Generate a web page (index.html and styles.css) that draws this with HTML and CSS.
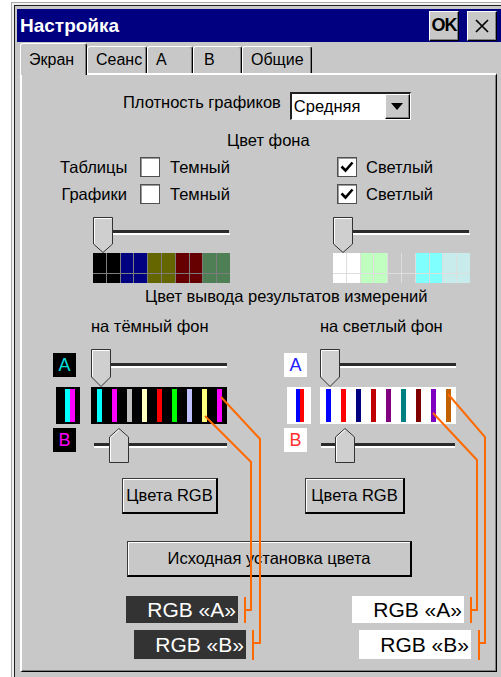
FILE: index.html
```html
<!doctype html>
<html lang="ru">
<head>
    <meta charset="UTF-8">
    <title>Настройка</title>
    <link rel="stylesheet" href="styles.css">
</head>
<body>
    <div class="window">
        <div class="frame">
            <div class="titlebar">
                <span class="title">Настройка</span>
                <button class="tb-btn ok">OK</button>
                <button class="tb-btn close">
                    <svg width="14" height="14" viewBox="0 0 14 14"><path d="M1 1L13 13M13 1L1 13" stroke="#000" stroke-width="1.7"/></svg>
                </button>
            </div>

            <!-- tabs -->
            <div class="tabs">
                <div class="tab active tab-screen">Экран</div>
                <div class="tab tab-session">Сеанс</div>
                <div class="tab tab-a">А</div>
                <div class="tab tab-b">В</div>
                <div class="tab tab-common">Общие</div>
            </div>

            <div class="panel">
                <div class="density">
                    <span class="density-label">Плотность графиков</span>
                    <div class="select">
                        <span class="select-value">Средняя</span>
                        <span class="select-arrow"><i></i></span>
                    </div>
                </div>

                <div class="caption bg-caption">Цвет фона</div>

                <div class="checks">
                    <span class="check-label">Таблицы</span>
                    <span class="checkbox"></span>
                    <span class="check-text">Темный</span>
                    <span class="checkbox checked"><svg width="18" height="18" viewBox="0 0 18 18"><path d="M3.5 8.5L7.5 12.5L14.5 4.5" fill="none" stroke="#000" stroke-width="2.6"/></svg></span>
                    <span class="check-text-right">Светлый</span>
                </div>
                <div class="checks">
                    <span class="check-label">Графики</span>
                    <span class="checkbox"></span>
                    <span class="check-text">Темный</span>
                    <span class="checkbox checked"><svg width="18" height="18" viewBox="0 0 18 18"><path d="M3.5 8.5L7.5 12.5L14.5 4.5" fill="none" stroke="#000" stroke-width="2.6"/></svg></span>
                    <span class="check-text-right">Светлый</span>
                </div>

                <!-- background palettes -->
                <div class="palettes">
                    <div class="palette">
                        <svg class="slider" width="137" height="36" viewBox="0 0 137 36">
                            <rect x="0" y="13" width="136" height="3" fill="#2b2b2b"/>
                            <rect x="0" y="16" width="137" height="2" fill="#fff"/>
                            <path d="M0.5 0.5H19.5V27L10 35.5L0.5 27Z" fill="#cfcfcf" stroke="#333"/>
                            <path d="M1.5 26.5V1.5H18.5" fill="none" stroke="#fff"/>
                        </svg>
                        <div class="swatches swatches-dark">
                            <i class="c-black"></i><i class="c-black"></i>
                            <i class="c-black"></i><i class="c-black"></i>
                            <i class="c-navy"></i><i class="c-navy"></i>
                            <i class="c-navy"></i><i class="c-navy"></i>
                            <i class="c-olive"></i><i class="c-olive"></i>
                            <i class="c-olive"></i><i class="c-olive"></i>
                            <i class="c-maroon"></i><i class="c-maroon"></i>
                            <i class="c-maroon"></i><i class="c-maroon"></i>
                            <i class="c-moss"></i><i class="c-moss"></i>
                            <i class="c-moss"></i><i class="c-moss"></i>
                        </div>
                    </div>
                    <div class="palette">
                        <svg class="slider" width="137" height="36" viewBox="0 0 137 36">
                            <rect x="0" y="13" width="136" height="3" fill="#2b2b2b"/>
                            <rect x="0" y="16" width="137" height="2" fill="#fff"/>
                            <path d="M0.5 0.5H19.5V27L10 35.5L0.5 27Z" fill="#cfcfcf" stroke="#333"/>
                            <path d="M1.5 26.5V1.5H18.5" fill="none" stroke="#fff"/>
                        </svg>
                        <div class="swatches swatches-light">
                            <i class="c-white"></i><i class="c-white"></i>
                            <i class="c-white"></i><i class="c-white"></i>
                            <i class="c-mint"></i><i class="c-mint"></i>
                            <i class="c-mint"></i><i class="c-mint"></i>
                            <i></i><i></i>
                            <i></i><i></i>
                            <i class="c-aqua"></i><i class="c-aqua"></i>
                            <i class="c-aqua"></i><i class="c-aqua"></i>
                            <i class="c-ice"></i><i class="c-ice"></i>
                            <i class="c-ice"></i><i class="c-ice"></i>
                        </div>
                    </div>
                </div>

                <div class="caption out-caption">Цвет вывода результатов измерений</div>

                <div class="outputs">
                    <!-- dark background -->
                    <div class="out">
                        <div class="out-title">на тёмный фон</div>
                        <div class="letter letter-a on-dark">A</div>
                        <svg class="slider-a" width="136" height="38" viewBox="0 0 136 38">
                            <rect x="0" y="14" width="136" height="3" fill="#2b2b2b"/>
                            <rect x="0" y="17" width="136" height="2" fill="#fff"/>
                            <path d="M0.5 0.5H19.5V28L10 37.5L0.5 28Z" fill="#cfcfcf" stroke="#333"/>
                            <path d="M1.5 27.5V1.5H18.5" fill="none" stroke="#fff"/>
                        </svg>
                        <div class="mini on-dark"><i class="b-cyan"></i><i class="b-magenta"></i></div>
                        <div class="stripe on-dark">
                            <i class="b-cyan"></i><i class="b-magenta"></i><i class="b-silver"></i>
                            <i class="b-cream"></i><i class="b-red"></i><i class="b-lime"></i>
                            <i class="b-lavender"></i><i class="b-yellow"></i><i class="b-magenta"></i>
                        </div>
                        <div class="letter letter-b on-dark">B</div>
                        <svg class="slider-b" width="136" height="35" viewBox="0 0 136 35">
                            <rect x="3" y="15" width="133" height="3" fill="#2b2b2b"/>
                            <rect x="3" y="18" width="133" height="2" fill="#fff"/>
                            <path d="M18.5 34.5V9L28 0.5L37.5 9V34.5Z" fill="#cfcfcf" stroke="#333"/>
                            <path d="M19.5 33.5V9.5L28 1.8" fill="none" stroke="#fff"/>
                        </svg>
                    </div>

                    <!-- light background -->
                    <div class="out out-light">
                        <div class="out-title">на светлый фон</div>
                        <div class="letter letter-a on-light">A</div>
                        <svg class="slider-a" width="136" height="38" viewBox="0 0 136 38">
                            <rect x="0" y="14" width="136" height="3" fill="#2b2b2b"/>
                            <rect x="0" y="17" width="136" height="2" fill="#fff"/>
                            <path d="M0.5 0.5H19.5V28L10 37.5L0.5 28Z" fill="#cfcfcf" stroke="#333"/>
                            <path d="M1.5 27.5V1.5H18.5" fill="none" stroke="#fff"/>
                        </svg>
                        <div class="mini on-light"><i class="b-blue"></i><i class="b-red"></i></div>
                        <div class="stripe on-light">
                            <i class="b-blue"></i><i class="b-red"></i><i class="b-navy"></i>
                            <i class="b-crimson"></i><i class="b-purple"></i><i class="b-teal"></i>
                            <i class="b-maroon"></i><i class="b-violet"></i><i class="b-rust"></i>
                        </div>
                        <div class="letter letter-b on-light">B</div>
                        <svg class="slider-b" width="136" height="35" viewBox="0 0 136 35">
                            <rect x="1" y="15" width="134" height="3" fill="#2b2b2b"/>
                            <rect x="1" y="18" width="134" height="2" fill="#fff"/>
                            <path d="M15.5 34.5V9L25 0.5L34.5 9V34.5Z" fill="#cfcfcf" stroke="#333"/>
                            <path d="M16.5 33.5V9.5L25 1.8" fill="none" stroke="#fff"/>
                        </svg>
                    </div>
                </div>

                <div class="btn-row">
                    <button class="btn btn-rgb-dark">Цвета RGB</button>
                    <button class="btn btn-rgb-light">Цвета RGB</button>
                </div>

                <button class="btn btn-reset">Исходная установка цвета</button>

                <div class="tag-row tag-row-a">
                    <span class="tag tag-dark">RGB «A»</span>
                    <span class="tag tag-light">RGB «A»</span>
                </div>
                <div class="tag-row tag-row-b">
                    <span class="tag tag-dark">RGB «B»</span>
                    <span class="tag tag-light">RGB «B»</span>
                </div>
            </div>
        </div>
    </div>

    <!-- callout lines from the stripes to the RGB labels -->
    <svg class="callouts" width="501" height="677" viewBox="0 0 501 677">
        <g fill="none" stroke="#ff6a00" stroke-width="2">
            <polyline points="205,416 251,462 251,610 245,610"/>
            <line x1="245" y1="597" x2="245" y2="623"/>
            <polyline points="221,397 260,439 260,643 253,643"/>
            <line x1="253" y1="630" x2="253" y2="660"/>
            <polyline points="433,413 477,460 477,610 471,610"/>
            <line x1="471" y1="597" x2="471" y2="623"/>
            <polyline points="448,394 485,437 485,643 479,643"/>
            <line x1="479" y1="630" x2="479" y2="660"/>
        </g>
    </svg>
</body>
</html>
```

FILE: styles.css
```css
body {
    margin: 0;
    width: 501px;
    height: 677px;
    overflow: hidden;
    position: relative;
    background: #fff;
    font-family: "Liberation Sans", Arial, sans-serif;
    font-size: 16.5px;
    color: #000;
}
.window {
    margin: 2px 0 0 11px;
    width: 496px;
    height: 680px;
    box-sizing: border-box;
    border: 1px solid #a8a8a8;
    padding: 2px;
    background: #f0f0f0;
}
.frame {
    height: 100%;
    box-sizing: border-box;
    border: 1px solid #1e1e1e;
    padding: 3px 2px;
    background: #c8c8c8;
}

/* title bar */
.titlebar {
    height: 33px;
    display: flex;
    align-items: center;
    gap: 8px;
    padding: 0 4px 0 3px;
    background: #000080;
}
.title {
    flex: 1;
    color: #fff;
    font-weight: bold;
    font-size: 19px;
}
.tb-btn {
    width: 30px;
    height: 30px;
    box-sizing: border-box;
    padding: 0;
    display: flex;
    align-items: center;
    justify-content: center;
    background: #c8c8c8;
    border: 1px solid;
    border-color: #fff #000 #000 #fff;
    box-shadow: inset -1px -1px #808080;
    font: bold 18px "Liberation Sans", Arial, sans-serif;
    letter-spacing: -1px;
    color: #000;
}

/* tabs */
.tabs {
    display: flex;
    align-items: flex-end;
    height: 31px;
    padding-left: 3px;
}
.tab {
    height: 27px;
    box-sizing: border-box;
    padding: 4px 0 0 8px;
    border: 1px solid;
    border-bottom: 0;
    border-color: #fff #000 #000 #fff;
    border-radius: 3px 3px 0 0;
    box-shadow: inset -1px 0 #808080;
    font-size: 16px;
}
.tab.active {
    height: 32px;
    margin-bottom: -2px;
    padding-top: 7px;
    background: #c8c8c8;
    position: relative;
    z-index: 1;
}
.tab-screen { width: 67px; }
.tab-session { width: 60px; }
.tab-a { width: 46px; }
.tab-b { width: 49px; padding-left: 10px; }
.tab-common { width: 70px; }

/* page */
.panel {
    width: 477px;
    height: 599px;
    margin-left: 3px;
    box-sizing: border-box;
    border-top: 2px solid #fff;
    border-left: 2px solid #fff;
    border-right: 1px solid #000;
    border-bottom: 1px solid #000;
    box-shadow: inset -1px -1px #808080;
}
.density {
    display: flex;
    align-items: center;
    gap: 9px;
    height: 28px;
    margin-top: 17px;
    padding-left: 101px;
}
.density-label {
    align-self: flex-start;
    line-height: 20px;
    margin-top: 0;
}
.select {
    width: 121px;
    height: 28px;
    box-sizing: border-box;
    display: flex;
    background: #fff;
    border-top: 2px solid #202020;
    border-left: 2px solid #202020;
    border-right: 1px solid #fff;
    border-bottom: 1px solid #fff;
}
.select-value {
    flex: 1;
    padding-left: 2px;
    line-height: 25px;
}
.select-arrow {
    width: 25px;
    box-sizing: border-box;
    display: flex;
    align-items: center;
    justify-content: center;
    background: #c8c8c8;
    border: 1px solid;
    border-color: #fff #000 #000 #fff;
    box-shadow: inset -1px -1px #808080;
}
.select-arrow i {
    border-left: 6px solid transparent;
    border-right: 6px solid transparent;
    border-top: 7px solid #000;
}
.caption {
    line-height: 20px;
}
.bg-caption {
    margin-top: 10px;
    padding-left: 205px;
}
.checks {
    display: flex;
    align-items: center;
    height: 20px;
    margin-top: 7px;
    padding-left: 38px;
}
.check-label {
    width: 67px;
    text-align: right;
}
.checkbox {
    width: 20px;
    height: 20px;
    margin-left: 13px;
    box-sizing: border-box;
    display: flex;
    align-items: center;
    justify-content: center;
    background: #fff;
    border: 1px solid #505050;
    box-shadow: inset 1px 1px #9a9a9a;
}
.checkbox.checked {
    margin-left: 0;
}
.check-text {
    width: 167px;
    margin-left: 10px;
}
.check-text-right {
    margin-left: 9px;
}

/* background colour palettes */
.palettes {
    display: flex;
    gap: 103px;
    margin-top: 13px;
    padding-left: 71px;
}
.palette {
    width: 137px;
}
.slider, .slider-a, .slider-b {
    display: block;
}
.swatches {
    display: grid;
    grid-auto-flow: column;
    grid-auto-columns: 1fr;
    grid-template-rows: 20px 9px;
    gap: 1px;
    height: 30px;
}
.swatches-dark { background: #7c7c7c; }
.swatches-light { background: #dedede; }
.swatches-light i:not([class]) { background: #c8c8c8; }
.c-black { background: #000; }
.c-navy { background: #000080; }
.c-olive { background: #666600; }
.c-maroon { background: #660000; }
.c-moss { background: #4f7f55; }
.c-white { background: #fff; }
.c-mint { background: #c0ffc0; }
.c-aqua { background: #80ffff; }
.c-ice { background: #c8ecec; }

.out-caption {
    margin-top: 3px;
    padding-left: 123px;
}

/* output colours */
.outputs {
    display: grid;
    grid-template-columns: 231px 231px;
    margin-top: 10px;
    padding-left: 31px;
}
.out {
    display: grid;
    grid-template-columns: 38px 136px;
    grid-template-rows: 33px 38px 37px 39px;
}
.out-light {
    grid-template-columns: 36px 136px;
}
.out-title {
    grid-column: 2;
    grid-row: 1;
    line-height: 20px;
}
.letter {
    grid-column: 1;
    width: 23px;
    height: 24px;
    margin-top: 4px;
    display: flex;
    align-items: center;
    justify-content: center;
    font-size: 18px;
}
.letter-a { grid-row: 2; }
.letter-b { grid-row: 4; }
.on-dark { background: #000; }
.on-light { background: #fff; }
.letter-a.on-dark { color: #00dede; }
.letter-b.on-dark { color: #ff00ff; }
.letter-a.on-light { color: #2020ff; }
.letter-b.on-light { color: #ff3030; }
.slider-a {
    grid-column: 2;
    grid-row: 2;
}
.slider-b {
    grid-column: 2;
    grid-row: 4;
    margin-top: 4px;
}
.mini {
    grid-column: 1;
    grid-row: 3;
    width: 24px;
    margin-left: 3px;
    box-sizing: border-box;
    display: flex;
    padding: 2px 0 2px 9px;
}
.mini i {
    width: 5px;
}
.out-light .mini i {
    width: 4px;
}
.stripe {
    grid-column: 2;
    grid-row: 3;
    display: flex;
    gap: 10px;
    padding: 2px 0 2px 6px;
}
.stripe i {
    width: 5px;
}
.b-cyan { background: #00ffff; }
.b-magenta { background: #ff00ff; }
.b-silver { background: #c0c0c0; }
.b-cream { background: #ffffc0; }
.b-red { background: #ff0000; }
.b-lime { background: #00ff00; }
.b-lavender { background: #c0c0ff; }
.b-yellow { background: #ffff80; }
.b-blue { background: #0000ff; }
.b-navy { background: #000080; }
.b-crimson { background: #c00000; }
.b-purple { background: #800080; }
.b-teal { background: #008080; }
.b-maroon { background: #800000; }
.b-violet { background: #8000c0; }
.b-rust { background: #c06000; }

/* buttons */
.btn {
    height: 36px;
    box-sizing: border-box;
    padding: 0;
    background: #c8c8c8;
    border: 1px solid #3a3a3a;
    border-right: 2px solid #000;
    border-bottom: 2px solid #000;
    box-shadow: inset 1px 1px #fff;
    font: 16.5px "Liberation Sans", Arial, sans-serif;
    color: #000;
}
.btn-row {
    display: flex;
    gap: 87px;
    margin-top: 15px;
    padding-left: 100px;
}
.btn-rgb-dark { width: 96px; }
.btn-rgb-light { width: 100px; }
.btn-reset {
    display: block;
    width: 285px;
    margin: 27px 0 0 105px;
}

/* RGB labels */
.tag-row {
    display: flex;
}
.tag-row-a {
    gap: 114px;
    margin-top: 19px;
    padding-left: 104px;
}
.tag-row-b {
    gap: 113px;
    margin-top: 7px;
    padding-left: 112px;
}
.tag {
    width: 112px;
    box-sizing: border-box;
    padding-right: 2px;
    text-align: right;
    font-size: 21px;
}
.tag-row-a .tag { height: 27px; line-height: 27px; }
.tag-row-b .tag { height: 29px; line-height: 29px; }
.tag-dark {
    background: #333;
    color: #fff;
}
.tag-light {
    background: #fff;
    color: #000;
}

.callouts {
    position: absolute;
    left: 0;
    top: 0;
    pointer-events: none;
}
```
